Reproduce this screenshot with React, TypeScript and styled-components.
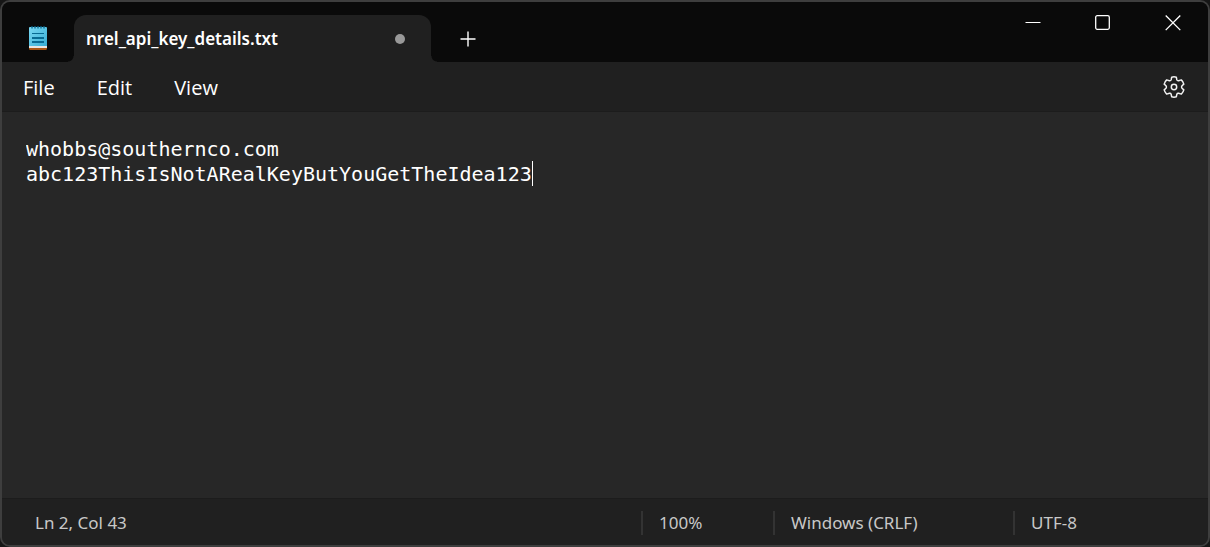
import React, { useState } from "react";
import styled, { createGlobalStyle } from "styled-components";

const GlobalStyle = createGlobalStyle`
  *, *::before, *::after { box-sizing: border-box; }
  body { margin: 0; background: #161616; }
  button { font: inherit; color: inherit; background: none; border: 0; padding: 0; margin: 0; }
`;

const Window = styled.div`
  display: flex;
  flex-direction: column;
  min-height: 100vh;
  border: 2px solid #3e3e3e;
  border-radius: 10px;
  overflow: hidden;
  background: #272727;
  color: #fff;
  font-family: "Noto Sans", "Open Sans", sans-serif;
`;

const TitleBar = styled.header`
  display: flex;
  align-items: flex-end;
  height: 60px;
  flex: none;
  background: #0a0a0a;
`;

const AppIcon = styled.svg`
  width: 20px;
  height: 26px;
  margin: 0 26px 11px;
  flex: none;
`;

const Tab = styled.div`
  position: relative;
  display: flex;
  align-items: center;
  width: 357px;
  height: 47px;
  padding: 0 26px 0 12px;
  border-radius: 12px 12px 0 0;
  background: #202020;
  font-size: 17px;
  font-weight: 600;

  &::before,
  &::after {
    content: "";
    position: absolute;
    bottom: 0;
    width: 6px;
    height: 6px;
  }
  &::before {
    right: 100%;
    background: radial-gradient(circle at 0 0, #0a0a0a 5px, #202020 6px);
  }
  &::after {
    left: 100%;
    background: radial-gradient(circle at 100% 0, #0a0a0a 5px, #202020 6px);
  }
`;

const TabTitle = styled.button`
  flex: 1;
  text-align: left;
`;

const UnsavedDot = styled.span`
  width: 10px;
  height: 10px;
  border-radius: 50%;
  background: #999;
`;

const IconButton = styled.button<{ $width: number; $height: number }>`
  display: flex;
  align-items: center;
  justify-content: center;
  width: ${(p) => p.$width}px;
  height: ${(p) => p.$height}px;
`;

const WindowControls = styled.div`
  display: flex;
  align-self: flex-start;
  margin-left: auto;
`;

const MenuBar = styled.nav`
  display: flex;
  align-items: center;
  flex: none;
  height: 50px;
  padding: 0 12px 0 0;
  border-bottom: 1px solid #1c1c1c;
  background: #202020;
`;

const MenuList = styled.div`
  display: flex;
  flex: 1;
  gap: 42px;
  padding: 2px 21px 0;
`;

const MenuItem = styled.button`
  font-family: "Open Sans", "Noto Sans", sans-serif;
  font-size: 20px;
  line-height: 28px;
`;

const Editor = styled.main`
  position: relative;
  display: flex;
  flex: 1;
  padding: 25px 24px;
  font: 20px/25px "DejaVu Sans Mono", "Liberation Mono", monospace;
`;

const TextArea = styled.textarea`
  flex: 1;
  padding: 0;
  border: 0;
  outline: 0;
  resize: none;
  background: transparent;
  color: #fff;
  caret-color: transparent;
  font: inherit;
`;

const Caret = styled.span`
  position: absolute;
  width: 1px;
  height: 25px;
  background: #fff;
`;

const StatusBar = styled.footer`
  display: grid;
  grid-template-columns: 1fr 132px 240px 195px;
  align-items: center;
  flex: none;
  height: 47px;
  padding-top: 2px;
  border-top: 1px solid #1c1c1c;
  background: #202020;
  color: #c8c8c8;
  font-size: 17px;
`;

const StatusItem = styled.span<{ $first?: boolean }>`
  padding-left: ${(p) => (p.$first ? 33 : 16)}px;
  border-left: ${(p) => (p.$first ? "0" : "2px solid #333")};
  line-height: 24px;
  white-space: nowrap;
`;

const NotepadIcon = () => (
  <AppIcon viewBox="0 0 20 26" aria-hidden="true">
    <defs>
      <linearGradient id="sheet" x1="0" y1="0" x2="1" y2="1">
        <stop offset="0" stopColor="#79d8f3" />
        <stop offset="1" stopColor="#39add3" />
      </linearGradient>
    </defs>
    <path d="M1 21h18v2.500q0 1.500-1.500 1.500h-15Q1 25 1 23.500z" fill="#a85413" />
    <path d="M1 20h18v3H1z" fill="#e8e4e0" />
    <path d="M1 3q0-1 1-1h16q1 0 1 1v18H1z" fill="url(#sheet)" />
    <path d="M4 1v2.500M7 1v2.500M10 1v2.500M13 1v2.500M16 1v2.500" stroke="#08658c" strokeWidth="1.300" />
    <path d="M4 8.500h12" stroke="#086a92" strokeWidth="1" />
    <path d="M4 13h12M4 17h12" stroke="#086a92" strokeWidth="2" />
  </AppIcon>
);

const GearIcon = () => (
  <svg width="24" height="24" viewBox="0 0 24 24" fill="none" stroke="#f2f2f2" strokeWidth="1.500" strokeLinejoin="round" aria-hidden="true">
    <path d="M9.700 2.200Q12 1.400 14.300 2.200L14.800 4.700Q15.300 5.900 16.600 5.700L19.300 4.900Q21.200 6.700 21.800 9.100L20 10.800Q19.100 12 20 13.200L21.800 14.900Q21.200 17.300 19.300 19.100L16.600 18.300Q15.300 18.100 14.800 19.300L14.300 21.800Q12 22.600 9.700 21.800L9.200 19.300Q8.700 18.100 7.400 18.300L4.700 19.100Q2.800 17.300 2.200 14.900L4 13.200Q4.900 12 4 10.800L2.200 9.100Q2.800 6.700 4.700 4.900L7.400 5.700Q8.700 5.900 9.200 4.700Z" />
    <circle cx="12" cy="12" r="2.700" />
  </svg>
);

export default function App() {
  const [text, setText] = useState(
    "whobbs@southernco.com\nabc123ThisIsNotARealKeyButYouGetTheIdea123"
  );
  const [cursor, setCursor] = useState(text.length);
  const lines = text.slice(0, cursor).split("\n");
  const row = lines.length;
  const column = lines[row - 1].length;

  return (
    <>
      <GlobalStyle />
      <Window>
        <TitleBar>
          <NotepadIcon />
          <Tab>
            <TabTitle>nrel_api_key_details.txt</TabTitle>
            <UnsavedDot />
          </Tab>
          <IconButton $width={74} $height={46} aria-label="New tab">
            <svg width="16" height="16" viewBox="0 0 16 16" stroke="#fff" strokeWidth="1.400" aria-hidden="true">
              <path d="M.5 8h15M8 .5v15" />
            </svg>
          </IconButton>
          <WindowControls>
            <IconButton $width={70} $height={42} aria-label="Minimize">
              <svg width="16" height="16" viewBox="0 0 16 16" stroke="#fff" aria-hidden="true">
                <path d="M.5 7.500h15" />
              </svg>
            </IconButton>
            <IconButton $width={70} $height={42} aria-label="Maximize">
              <svg width="16" height="16" viewBox="0 0 16 16" fill="none" stroke="#fff" strokeWidth="1.300" aria-hidden="true">
                <rect x=".7" y=".7" width="13.600" height="13.600" rx="1.500" />
              </svg>
            </IconButton>
            <IconButton $width={70} $height={42} aria-label="Close">
              <svg width="16" height="16" viewBox="0 0 16 16" stroke="#fff" strokeWidth="1.300" aria-hidden="true">
                <path d="M.7.5l14.600 14.600M15.300.5L.7 15.100" />
              </svg>
            </IconButton>
          </WindowControls>
        </TitleBar>
        <MenuBar>
          <MenuList>
            <MenuItem>File</MenuItem>
            <MenuItem>Edit</MenuItem>
            <MenuItem>View</MenuItem>
          </MenuList>
          <IconButton $width={44} $height={44} aria-label="Settings">
            <GearIcon />
          </IconButton>
        </MenuBar>
        <Editor>
          <TextArea
            aria-label="Text editor"
            spellCheck={false}
            value={text}
            onChange={(e) => setText(e.target.value)}
            onSelect={(e) => setCursor(e.currentTarget.selectionStart)}
          />
          <Caret
            style={{
              top: `${24 + (row - 1) * 25}px`,
              left: `calc(24px + ${column}ch)`,
            }}
          />
        </Editor>
        <StatusBar>
          <StatusItem $first>
            Ln {row}, Col {column + 1}
          </StatusItem>
          <StatusItem>100%</StatusItem>
          <StatusItem>Windows (CRLF)</StatusItem>
          <StatusItem>UTF-8</StatusItem>
        </StatusBar>
      </Window>
    </>
  );
}
